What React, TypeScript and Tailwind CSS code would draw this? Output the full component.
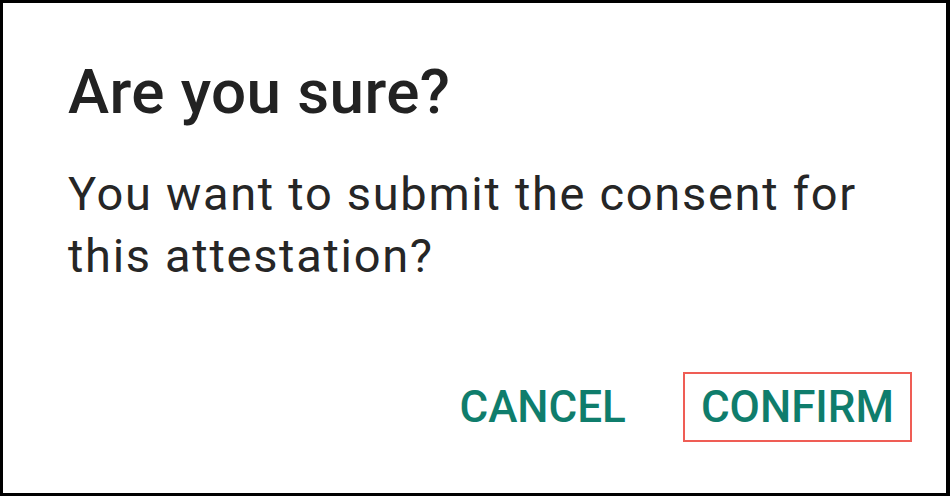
export default function App() {
  return (
    <div
      className="w-[950px] h-[496px] bg-white border-[3px] border-r-4 border-black flex flex-col"
      style={{ fontFamily: "Roboto, 'Noto Sans', sans-serif" }}
    >
      <div className="pl-[65px] pr-8 pt-[53px]">
        <h1 className="text-[62px] leading-[72px] tracking-[0.4px] font-medium text-[#222222]">Are you sure?</h1>
        <p className="mt-[35px] text-[47px] leading-[62px] tracking-[1.7px] text-[#262626]">
          You want to submit the consent for
          <br />
          this attestation?
        </p>
      </div>
      <div className="mt-auto mb-[51px] mr-[34px] flex justify-end items-center gap-[41px]">
        <button className="px-[16px] h-[70px] text-[44px] font-medium text-[#0f7d6c] leading-none">CANCEL</button>
        <button className="px-[16px] h-[70px] text-[44px] font-medium text-[#0f7d6c] leading-none border-2 border-[#ef5d55]">
          CONFIRM
        </button>
      </div>
    </div>
  );
}
